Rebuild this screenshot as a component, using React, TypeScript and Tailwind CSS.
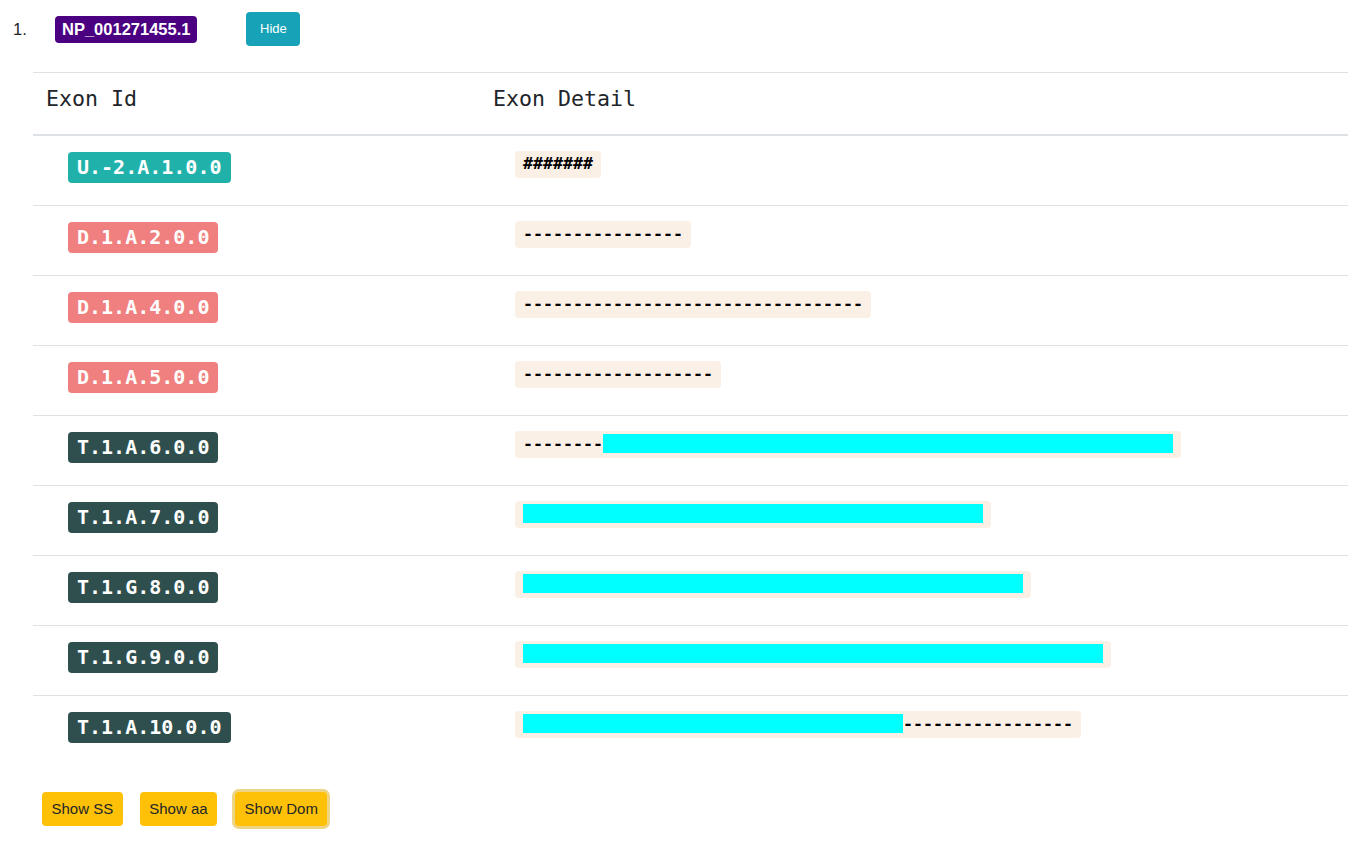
import React from "react";

type Seg = { t: "d" | "c" | "h"; n: number };
type Row = { id: string; color: string; segs: Seg[] };

const rows: Row[] = [
  { id: "U.-2.A.1.0.0", color: "bg-[#20b2aa]", segs: [{ t: "h", n: 7 }] },
  { id: "D.1.A.2.0.0", color: "bg-[#f08080]", segs: [{ t: "d", n: 16 }] },
  { id: "D.1.A.4.0.0", color: "bg-[#f08080]", segs: [{ t: "d", n: 34 }] },
  { id: "D.1.A.5.0.0", color: "bg-[#f08080]", segs: [{ t: "d", n: 19 }] },
  { id: "T.1.A.6.0.0", color: "bg-[#2f4f4f]", segs: [{ t: "d", n: 8 }, { t: "c", n: 57 }] },
  { id: "T.1.A.7.0.0", color: "bg-[#2f4f4f]", segs: [{ t: "c", n: 46 }] },
  { id: "T.1.G.8.0.0", color: "bg-[#2f4f4f]", segs: [{ t: "c", n: 50 }] },
  { id: "T.1.G.9.0.0", color: "bg-[#2f4f4f]", segs: [{ t: "c", n: 58 }] },
  { id: "T.1.A.10.0.0", color: "bg-[#2f4f4f]", segs: [{ t: "c", n: 38 }, { t: "d", n: 17 }] },
];

const mono = "font-['DejaVu_Sans_Mono',monospace]";

function Detail({ segs }: { segs: Seg[] }) {
  return (
    <div className="inline-flex items-start h-[27px] pt-[3px] px-2 rounded-[4px] bg-[#faf0e6]">
      {segs.map((s, i) =>
        s.t === "c" ? (
          <span
            key={i}
            className="block h-[19px] bg-[#00ffff]"
            style={{ width: s.n * 10 }}
          />
        ) : (
          <span
            key={i}
            className={`${mono} block h-[19px] leading-[19px] text-[16.61px] font-bold text-black whitespace-pre`}
            style={{ width: s.n * 10 }}
          >
            {(s.t === "h" ? "#" : "-").repeat(s.n)}
          </span>
        )
      )}
    </div>
  );
}

export default function App() {
  return (
    <div className="min-h-[843px] bg-white text-[#212529] font-['Liberation_Sans',Arial,sans-serif]">
      {/* top line */}
      <div className="flex items-center h-[34px] mt-[12px]">
        <span className="ml-[13px] w-[42px] text-[16.5px] leading-[24px]">1.</span>
        <span className="h-[27px] px-[7px] rounded-[4px] bg-[#4b0082] text-white font-bold text-[16.5px] leading-[27px]">
          NP_001271455.1
        </span>
        <button className="ml-[49px] h-[34px] w-[54px] rounded-[4px] bg-[#17a2b8] text-white text-[13px] leading-[34px]">
          Hide
        </button>
      </div>

      {/* table */}
      <div className="ml-[33px] mt-[26px]">
        <div className="grid grid-cols-[448px_1fr] h-[61px] border-t border-b-2 border-[#dee2e6] box-content">
          <div className={`${mono} pl-[13px] pt-[9px] text-[21.6px] leading-[33px]`}>Exon Id</div>
          <div className={`${mono} pl-[12px] pt-[9px] text-[21.6px] leading-[33px]`}>Exon Detail</div>
        </div>
        {rows.map((r, i) => (
          <div
            key={r.id}
            className={`grid grid-cols-[448px_1fr] h-[69px] box-content ${i > 0 ? "border-t border-[#dee2e6]" : ""}`}
          >
            <div className="pl-[35px] pt-[16px]">
              <span
                className={`${mono} inline-block h-[31px] px-[9px] rounded-[4px] ${r.color} text-white font-bold text-[20px] leading-[31px]`}
              >
                {r.id}
              </span>
            </div>
            <div className="pl-[34px] pt-[15px]">
              <Detail segs={r.segs} />
            </div>
          </div>
        ))}
      </div>

      {/* bottom buttons */}
      <div className="flex items-center gap-[17px] ml-[42px] mt-[27px]">
        <button className="h-[34px] px-[9.5px] rounded-[4px] bg-[#ffc107] text-[#212529] text-[15px]">
          Show SS
        </button>
        <button className="h-[34px] px-[9.5px] rounded-[4px] bg-[#ffc107] text-[#212529] text-[15px]">
          Show aa
        </button>
        <button className="ml-[1px] h-[34px] px-[9.5px] rounded-[4px] bg-[#ffc107] text-[#212529] text-[15px] shadow-[0_0_0_3px_rgba(222,170,12,0.5)]">
          Show Dom
        </button>
      </div>
    </div>
  );
}
